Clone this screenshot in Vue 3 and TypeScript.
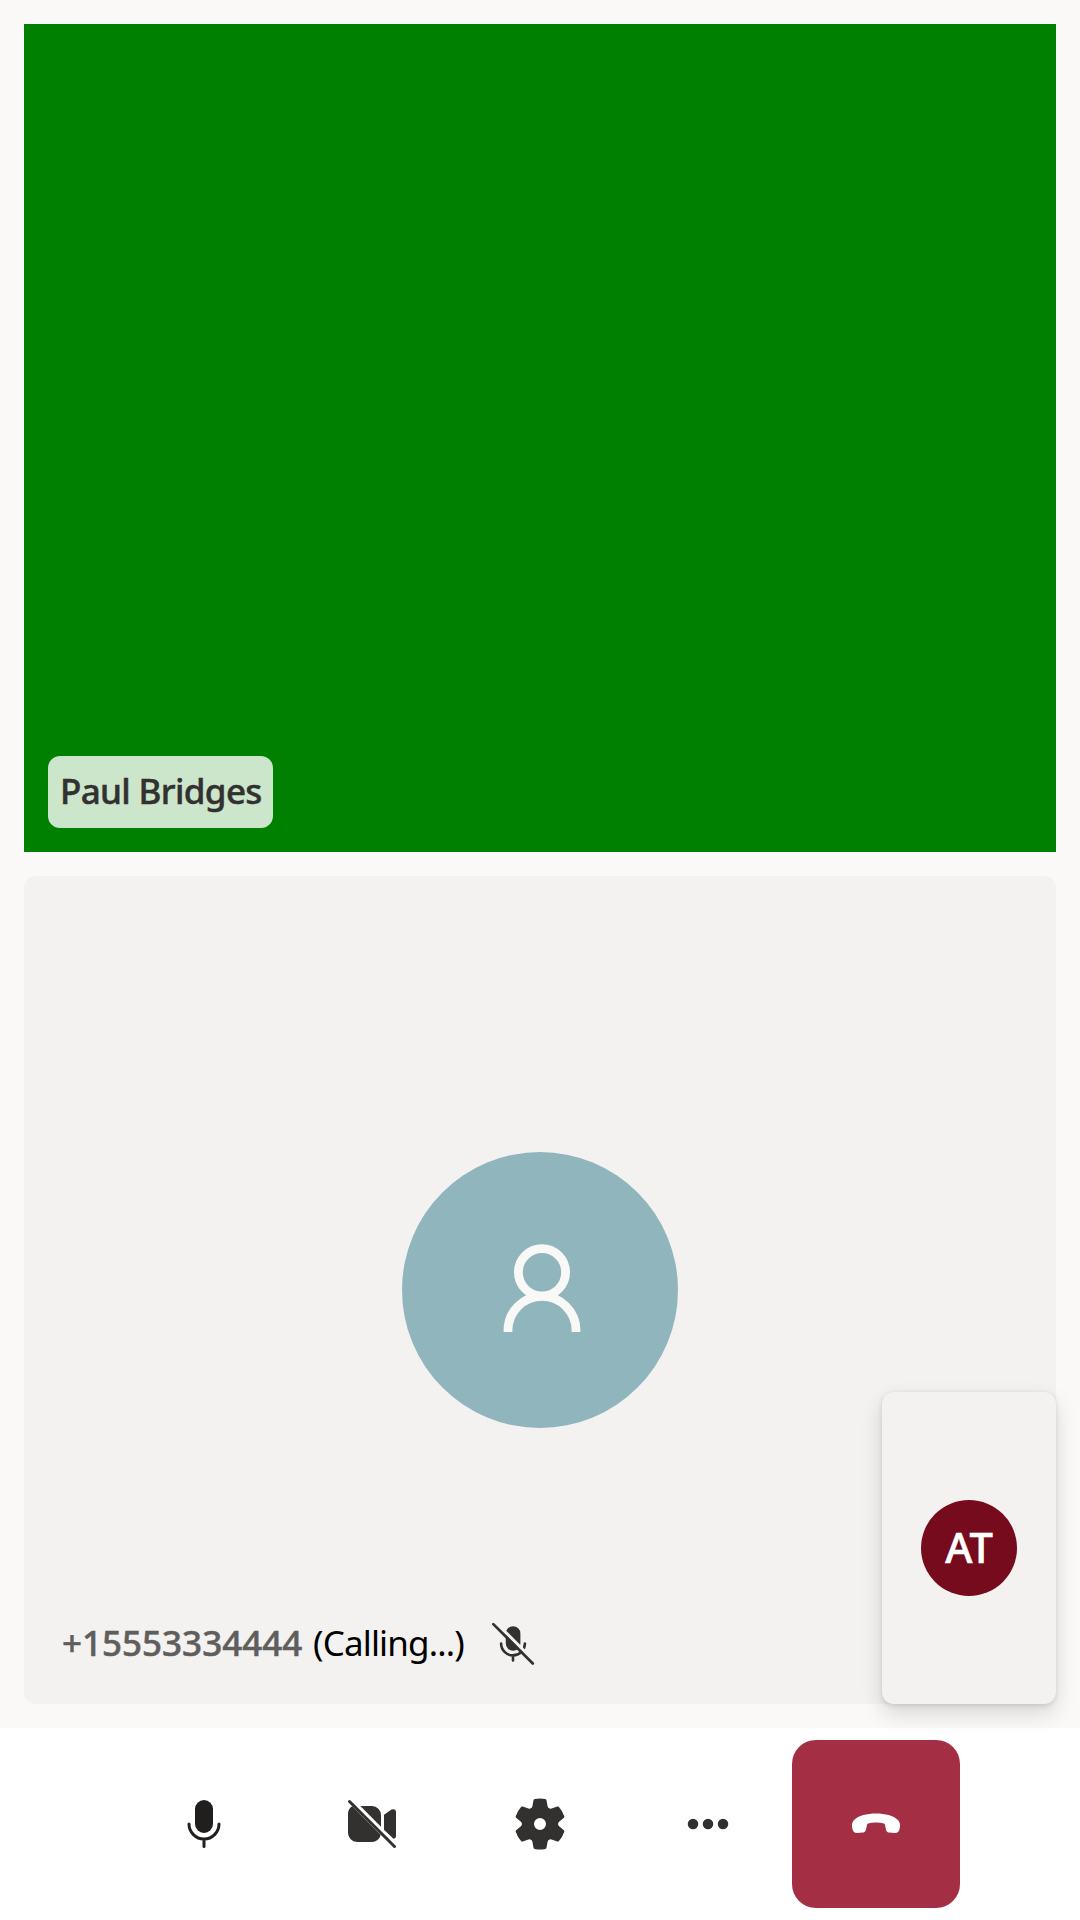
<script setup lang="ts">
const participant = 'Paul Bridges'
const callee = '+15553334444'
const initials = 'AT'
</script>

<template>
  <main class="call">
    <section class="gallery">
      <article class="tile video">
        <span class="name-tag">{{ participant }}</span>
      </article>
      <article class="tile">
        <div class="persona">
          <svg width="80" height="92" viewBox="0 0 80 92" fill="none" stroke="#f8f8f6" stroke-width="8.8">
            <circle cx="40" cy="32.3" r="23.6" />
            <path d="M6 92v-1.7a34 34 0 0 1 68 0V92" />
          </svg>
        </div>
        <div class="status">
          <span class="number">{{ callee }}</span>
          <span class="calling">(Calling...)</span>
          <svg class="muted" width="54" height="54" viewBox="0 0 54 54" fill="none" stroke="#323130" stroke-linecap="round">
            <path d="M19.8 16.5v10a7.3 7.3 0 0 0 14.6 0v-10a7.3 7.3 0 0 0-14.6 0z" fill="#323130" stroke="none" />
            <path d="M15.1 26.5a11.9 11.9 0 0 0 23.8 0M27 39v4.5" stroke-width="2.6" />
            <path d="M9 4.8l38 38" stroke="#f3f2f1" stroke-width="3.2" />
            <path d="M7.3 7.1l39.5 39.4" stroke-width="2.7" />
          </svg>
        </div>
      </article>
      <aside class="self-view">
        <div class="coin">{{ initials }}</div>
      </aside>
    </section>
    <nav class="controls">
      <button aria-label="Microphone">
        <svg viewBox="0 0 20 20" fill="none" stroke="#201f1e" stroke-linecap="round">
          <rect x="7" y="2" width="6" height="11" rx="3" fill="#201f1e" stroke="none" />
          <path d="M5 10a5 5 0 0 0 10 0M10 15v2.5" />
        </svg>
      </button>
      <button aria-label="Camera">
        <svg viewBox="0 0 20 20" fill="#323130">
          <path d="M6.12 4H10a3 3 0 0 1 3 3v3.88zM3.4 4.1A3 3 0 0 0 2 6.8V13a3 3 0 0 0 3 3h5a3 3 0 0 0 2.9-2.3z" />
          <path d="M14 11.88V6.93l2.5-1.75Q17.9 4.8 18 6v8q0 .8-.85.95z" />
          <path d="M2.5 2.5l15 15" stroke="#323130" stroke-linecap="round" />
        </svg>
      </button>
      <button aria-label="Settings">
        <svg viewBox="0 0 20 20" fill="#323130">
          <path fill-rule="evenodd" d="M1.91 7.38A8.5 8.5 0 0 1 3.69 4.3a.5.5 0 0 1 .54-.13l1.92.68a1 1 0 0 0 1.32-.76l.36-2a.5.5 0 0 1 .4-.4 8.53 8.53 0 0 1 3.55 0c.2.04.35.2.38.4l.37 2a1 1 0 0 0 1.32.76l1.92-.68a.5.5 0 0 1 .54.13 8.5 8.5 0 0 1 1.78 3.08c.06.2 0 .4-.15.54l-1.56 1.32a1 1 0 0 0 0 1.52l1.56 1.32a.5.5 0 0 1 .15.54 8.5 8.5 0 0 1-1.78 3.08.5.5 0 0 1-.54.13l-1.92-.68a1 1 0 0 0-1.32.76l-.37 2a.5.5 0 0 1-.38.4 8.53 8.53 0 0 1-3.56 0 .5.5 0 0 1-.39-.4l-.36-2a1 1 0 0 0-1.32-.76l-1.92.68a.5.5 0 0 1-.54-.13 8.5 8.5 0 0 1-1.78-3.08.5.5 0 0 1 .15-.54l1.56-1.32a1 1 0 0 0 0-1.52L2.06 7.92a.5.5 0 0 1-.15-.54zM8 10a2 2 0 1 0 4 0 2 2 0 0 0-4 0z" />
        </svg>
      </button>
      <button aria-label="More options">
        <svg viewBox="0 0 20 20" fill="#323130">
          <circle cx="5" cy="10" r="1.75" />
          <circle cx="10" cy="10" r="1.75" />
          <circle cx="15" cy="10" r="1.75" />
        </svg>
      </button>
      <button class="hangup" aria-label="Leave">
        <svg viewBox="0 0 20 20" fill="#fff">
          <path d="M18 10.8l-.1.7q-.3 1.6-1.8 1.5l-1.6-.14c-.7-.06-1.05-.45-1.2-1.15L13 10.25Q12.9 9.95 12.6 9.85A7.5 7.5 0 0 0 10 9.5a7.5 7.5 0 0 0-2.6.35Q7.1 9.95 7 10.25l-.32 1.46c-.15.7-.5 1.09-1.2 1.15L3.9 13q-1.5.1-1.8-1.5L2 10.8c-.08-.84.1-1.55.7-2.17C4.15 7.2 6.98 6.5 10 6.5s5.87.7 7.3 2.13c.6.62.78 1.33.7 2.17z" />
        </svg>
      </button>
    </nav>
  </main>
</template>

<style>
body {
  margin: 0;
}
</style>

<style scoped>
.call {
  display: flex;
  flex-direction: column;
  height: 1920px;
  background: #faf9f8;
  font-family: "Noto Sans", "Open Sans", sans-serif;
}
.gallery {
  position: relative;
  box-sizing: border-box;
  height: 1728px;
  padding: 24px;
  display: flex;
  flex-direction: column;
  gap: 24px;
}
.tile {
  position: relative;
  flex: 1;
  display: flex;
  align-items: center;
  justify-content: center;
  background: #f3f2f1;
  border-radius: 12px;
}
.video {
  background: #008000;
  border-radius: 0;
}
.name-tag {
  position: absolute;
  left: 24px;
  bottom: 24px;
  box-sizing: border-box;
  width: 225px;
  height: 72px;
  padding-left: 12px;
  border-radius: 12px;
  background: rgba(255, 255, 255, 0.8);
  color: #323130;
  font-size: 35px;
  font-weight: 500;
  letter-spacing: -0.65px;
  line-height: 70px;
  white-space: nowrap;
  -webkit-text-stroke: 0.5px currentColor;
}
.persona {
  width: 276px;
  height: 276px;
  border-radius: 50%;
  background: #91b5bd;
  display: flex;
  align-items: center;
  justify-content: center;
}
.persona svg {
  margin: -8px 0 0 3.6px;
}
.status {
  position: absolute;
  left: 38px;
  bottom: 24px;
  height: 72px;
  display: flex;
  align-items: center;
  font-size: 35px;
  line-height: 48px;
  white-space: nowrap;
}
.number,
.calling {
  padding-bottom: 3px;
}
.number {
  width: 251px;
  color: #605e5c;
  font-weight: 500;
  -webkit-text-stroke: 0.5px currentColor;
}
.calling {
  width: 173px;
  color: #000;
  letter-spacing: -0.85px;
}
.self-view {
  position: absolute;
  right: 24px;
  bottom: 24px;
  width: 174px;
  height: 312px;
  border-radius: 12px;
  background: #f3f2f1;
  box-shadow: 0 9.6px 21.6px rgba(0, 0, 0, 0.133), 0 1.8px 5.4px rgba(0, 0, 0, 0.11);
  display: flex;
  align-items: center;
  justify-content: center;
}
.coin {
  width: 96px;
  height: 96px;
  border-radius: 50%;
  background: #750b1c;
  color: #fff;
  font-size: 41.5px;
  font-weight: 500;
  line-height: 94px;
  text-align: center;
  -webkit-text-stroke: 0.6px currentColor;
}
.controls {
  position: relative;
  height: 192px;
  display: flex;
  align-items: center;
  justify-content: center;
}
.controls::before {
  content: "";
  position: absolute;
  inset: 0;
  background: #fff;
}
.gallery {
  z-index: 1;
}
.controls::before {
  z-index: 0;
}
button {
  position: relative;
  width: 168px;
  height: 168px;
  padding: 0;
  border: 0;
  border-radius: 24px;
  background: transparent;
  display: flex;
  align-items: center;
  justify-content: center;
}
button svg {
  width: 60px;
  height: 60px;
}
.hangup {
  background: #a42e43;
}
</style>
